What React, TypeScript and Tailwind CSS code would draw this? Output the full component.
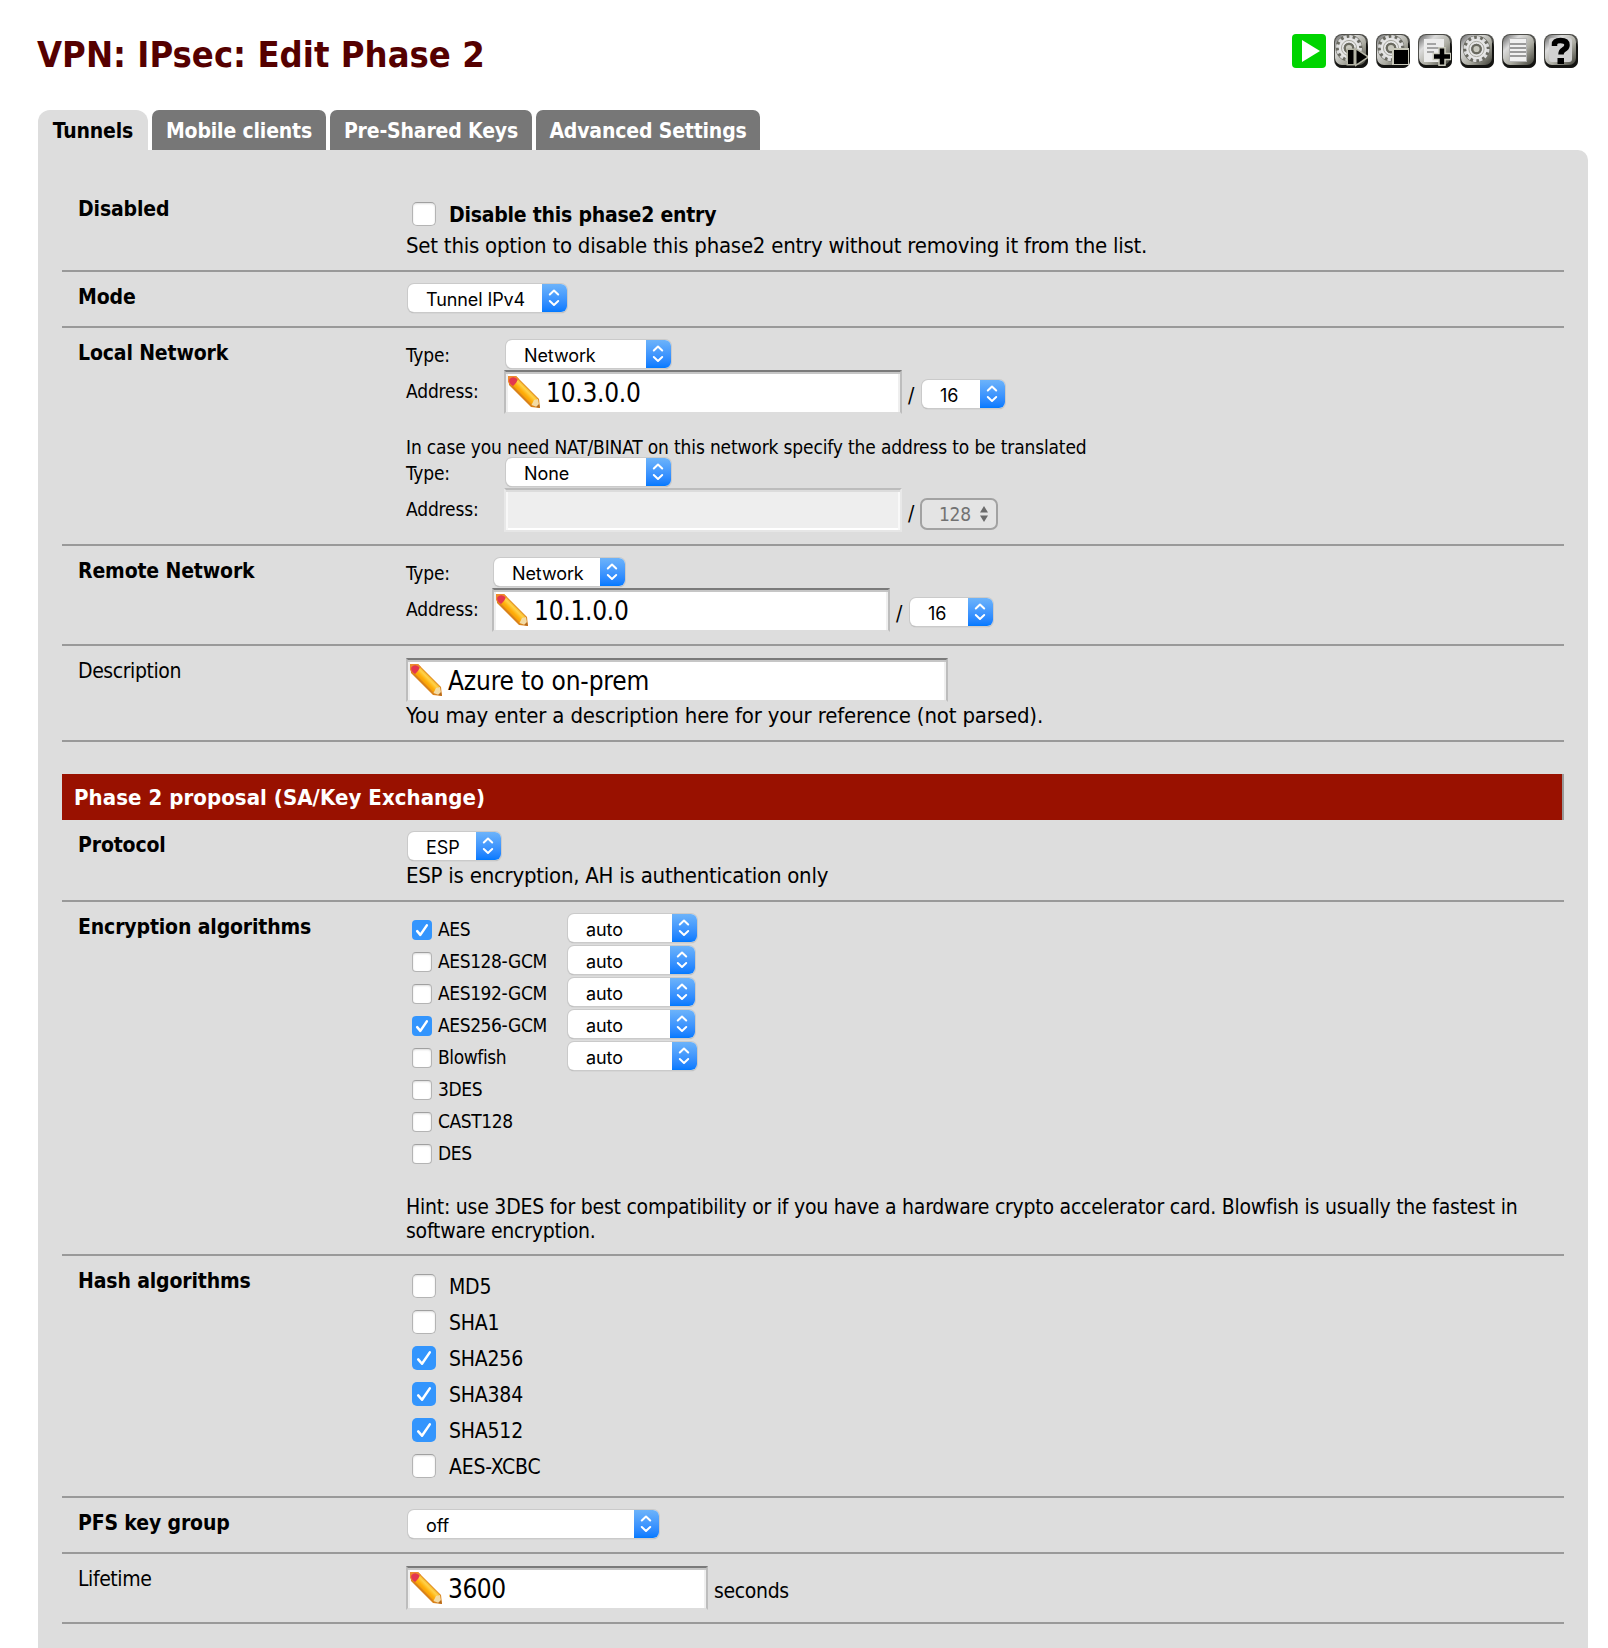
import React from "react";

const UI = 'font-["DejaVu_Sans_Condensed","DejaVu_Sans",sans-serif]';

function Pencil() {
  return (
    <svg viewBox="0 0 32 32" className="h-8 w-8 shrink-0">
      <defs>
        <linearGradient id="pencilBody" x1="0" y1="1" x2="1" y2="0">
          <stop offset="0.3" stopColor="#e88a10" />
          <stop offset="0.46" stopColor="#ffae08" />
          <stop offset="0.56" stopColor="#ffd24a" />
          <stop offset="0.68" stopColor="#e8950f" />
        </linearGradient>
      </defs>
      <path d="M0 1 L8 0 L31 23 L32 32 L23 31 L1 9 Z" fill="#d9821a" />
      <path d="M3 8 L9 2 L29.5 22.5 L24 29 Z" fill="url(#pencilBody)" />
      <path d="M0 0 L8 0 L11 3 L4 10 L0 6 Z" fill="#ee8a2e" />
      <path d="M1.5 3 Q5 -0.5 9 3 Q10 6 5 10 Q0 7 1.5 3 Z" fill="#e3364f" />
      <path d="M23.5 29 L26 24 L30 23 L31 29 L29 31 Z" fill="#f3dba4" />
      <path d="M28 31 L31 28 L32 32 Z" fill="#b5691c" />
    </svg>
  );
}

function Select({ label, className }: { label: string; className: string }) {
  return (
    <div
      className={`flex h-7 shrink-0 overflow-hidden rounded-md bg-white shadow-[0_0_0_1px_#cacaca,0_1px_1px_#8e8e8e] ${className}`}
    >
      <div className='flex-1 whitespace-nowrap pl-[18px] pt-[2px] font-["Inter",sans-serif] text-[18px] leading-7 tracking-[-0.1px]'>{label}</div>
      <div className="flex w-[25px] items-center justify-center bg-linear-to-b from-[#6cb3fa] to-[#0079ff] pr-px">
        <svg viewBox="0 0 12 18" className="h-[18px] w-3" fill="none" stroke="#fff" strokeWidth="2" strokeLinecap="round" strokeLinejoin="round">
          <path d="M1.8 5.5 L6 1.5 L10.2 5.5 M1.8 12 L6 16 L10.2 12" />
        </svg>
      </div>
    </div>
  );
}

function Check({ on, small }: { on?: boolean; small?: boolean }) {
  const size = small ? "size-5 rounded-[4px]" : "size-6 rounded-[5px]";
  if (!on)
    return (
      <span
        className={`block shrink-0 border border-[#b4b4b4] border-t-[#a0a0a0] bg-white shadow-[inset_0_1px_2px_#ddd] ${size}`}
      />
    );
  return (
    <span className={`block shrink-0 bg-[#3395fd] ${size}`}>
      <svg viewBox="0 0 24 24" className="h-full w-full" fill="none" stroke="#fff" strokeWidth={small ? 3 : 2.5} strokeLinecap="round" strokeLinejoin="round">
        <path d="M6.2 13.4 L10 17.8 L17.8 6.4" />
      </svg>
    </span>
  );
}

function Input({ value, className }: { value: string; className: string }) {
  return (
    <div
      className={`flex h-11 shrink-0 items-start border-2 border-x-[#bdbdbd] border-t-[#7a7a7a] border-b-[#dddddd] bg-white pl-0.5 pt-1 shadow-[inset_0_2px_0_#c6c6c6,inset_2px_0_0_#efefef,inset_-2px_0_0_#efefef] ${className}`}
    >
      <Pencil />
      <span className="ml-1.5 whitespace-nowrap pt-px text-[26px] leading-8">{value}</span>
    </div>
  );
}

function Row({ label, plain, className, children }: { label: string; plain?: boolean; className: string; children: React.ReactNode }) {
  return (
    <div className={`flex border-b-2 border-[#999999] ${className}`}>
      <div className={`w-[344px] shrink-0 pl-4 pt-[13px] text-[21px] leading-6 ${plain ? "tracking-[-0.42px]" : "font-bold tracking-[-0.14px]"}`}>
        {label}
      </div>
      <div className="min-w-0 flex-1 pt-3">{children}</div>
    </div>
  );
}

function Small({ className, children }: { className: string; children: React.ReactNode }) {
  return <div className={`shrink-0 whitespace-nowrap text-[19px] leading-6 tracking-[-0.15px] ${className}`}>{children}</div>;
}

function Note({ className, children }: { className: string; children: React.ReactNode }) {
  return <div className={`whitespace-nowrap text-[22px] leading-6 ${className}`}>{children}</div>;
}

function Slash() {
  return <div className="w-5 shrink-0 pl-1.5 pt-3.5 text-[21px] leading-6">/</div>;
}

function Base({ kind }: { kind: string }) {
  return (
    <>
      <defs>
        <linearGradient id={`metal-${kind}`} x1="0" y1="0" x2="1" y2="1">
          <stop offset="0" stopColor="#5f5f5f" />
          <stop offset="0.28" stopColor="#dcdcdc" />
          <stop offset="0.6" stopColor="#acaca2" />
          <stop offset="1" stopColor="#3c3c34" />
        </linearGradient>
      </defs>
      <rect x="0" y="0" width="34" height="34" rx="8" fill="#4e4e4a" />
      <rect x="1" y="6" width="33" height="28" rx="7" fill="#141412" />
      <rect x="1" y="1" width="31" height="30" rx="7" fill={`url(#metal-${kind})`} />
    </>
  );
}

function Gear({ cx, cy }: { cx: number; cy: number }) {
  return (
    <>
      <circle cx={cx} cy={cy} r="13.5" fill="#6a6a62" />
      <circle cx={cx} cy={cy} r="11" fill="none" stroke="#dcdcdc" strokeWidth="4" strokeDasharray="3.2 2.56" />
      <circle cx={cx} cy={cy} r="7.8" fill="none" stroke="#e6e6e6" strokeWidth="5" />
      <circle cx={cx} cy={cy} r="7.6" fill="none" stroke="#a8a8a0" strokeWidth="1" />
      <circle cx={cx} cy={cy} r="4.2" fill="#c8c8be" stroke="#6a6a60" strokeWidth="2.2" />
    </>
  );
}

function ToolIcon({ kind }: { kind: string }) {
  return (
    <svg viewBox="0 0 34 34" className="size-[34px]">
      {kind === "play" && (
        <>
          <rect width="34" height="34" rx="4" fill="#00d400" />
          <path d="M10 6 L28 17 L10 28 Z" fill="#fff" />
        </>
      )}
      {kind === "restart" && (
        <>
          <Base kind={kind} />
          <Gear cx={15} cy={14} />
          <path d="M14 16 H19.5 V30 H14 Z M22.5 16 L33 23 L22.5 30 Z" fill="#000" stroke="#b4b4a6" strokeWidth="3" />
          <path d="M14 16 H19.5 V30 H14 Z M22.5 16 L33 23 L22.5 30 Z" fill="#000" />
        </>
      )}
      {kind === "stop" && (
        <>
          <Base kind={kind} />
          <Gear cx={15} cy={14} />
          <rect x="16" y="14" width="17" height="17" fill="#c9c9bb" />
          <rect x="18" y="16" width="14" height="14" fill="#000" />
        </>
      )}
      {kind === "add" && (
        <>
          <Base kind={kind} />
          <rect x="6" y="5" width="20" height="23" fill="#ececec" />
          <path d="M9 10 H18 M9 14 H22 M9 18 H16" stroke="#8c8c8c" strokeWidth="1.6" />
          <path d="M24 13 V32 M14.5 22.5 H33" stroke="#c9c9bb" strokeWidth="7.5" />
          <path d="M24 14.5 V30.5 M16 22.5 H32" stroke="#000" strokeWidth="4.5" />
        </>
      )}
      {kind === "gear" && (
        <>
          <Base kind={kind} />
          <Gear cx={16.5} cy={15} />
        </>
      )}
      {kind === "list" && (
        <>
          <Base kind={kind} />
          <rect x="7.5" y="4.5" width="17" height="23" fill="#f0f0f0" stroke="#b5b5b5" />
          <path d="M8 10 H24 M8 14 H24 M8 18 H24 M8 22 H24" stroke="#7d7d7d" strokeWidth="1.6" />
        </>
      )}
      {kind === "help" && (
        <>
          <Base kind={kind} />
          <rect x="5" y="4" width="23" height="24" rx="3" fill="#d0d0d0" />
          <path d="M10.5 12 V10.5 Q10.5 6.5 16.5 6.5 Q23 6.5 23 11 Q23 14 19.5 15.8 Q17 17.2 17 20.5" fill="none" stroke="#000" strokeWidth="5.5" />
          <rect x="13.5" y="24" width="6.5" height="6" fill="#000" />
        </>
      )}
    </svg>
  );
}

const encryption = [
  { name: "AES", on: true, select: "w-[129px]" },
  { name: "AES128-GCM", select: "w-[127px]" },
  { name: "AES192-GCM", select: "w-[127px]" },
  { name: "AES256-GCM", on: true, select: "w-[127px]" },
  { name: "Blowfish", select: "w-[129px]" },
  { name: "3DES" },
  { name: "CAST128" },
  { name: "DES" },
];

const hashes = [
  { name: "MD5" },
  { name: "SHA1" },
  { name: "SHA256", on: true },
  { name: "SHA384", on: true },
  { name: "SHA512", on: true },
  { name: "AES-XCBC" },
];

const tabs = [
  { name: "Mobile clients", width: "w-[174px]" },
  { name: "Pre-Shared Keys", width: "w-[202px]" },
  { name: "Advanced Settings", width: "w-[224px]" },
];

export default function App() {
  return (
    <div className={`flex h-[1648px] w-[1608px] flex-col overflow-hidden bg-white pl-[38px] pr-5 text-black ${UI}`}>
      <header className="flex h-[110px] shrink-0 items-start justify-between pr-[10px] pt-[34px]">
        <h1 className="-ml-px -mt-px text-[36px] font-bold leading-[44px] tracking-[0.04px] text-[#550000]">VPN: IPsec: Edit Phase 2</h1>
        <div className="flex gap-2">
          {["play", "restart", "stop", "add", "gear", "list", "help"].map((k) => (
            <ToolIcon key={k} kind={k} />
          ))}
        </div>
      </header>

      <nav className="flex h-10 shrink-0 gap-1 text-center text-[21px] font-bold leading-[42px] tracking-[-0.16px]">
        <div className="h-10 w-[110px] rounded-t-[12px] bg-[#dddddd]">Tunnels</div>
        {tabs.map((t) => (
          <div key={t.name} className={`h-10 whitespace-nowrap rounded-t-[7px] bg-[#777777] text-white ${t.width}`}>
            {t.name}
          </div>
        ))}
      </nav>

      <main className="flex-1 rounded-tr-[10px] bg-[#dddddd] pl-6 pr-6 pt-[34px]">
        <Row label="Disabled" className="h-[88px]">
          <div className="flex pl-1.5 pt-1.5">
            <Check />
            <span className="ml-[13px] pt-px text-[21px] font-bold leading-6 tracking-[-0.22px]">Disable this phase2 entry</span>
          </div>
          <Note className="mt-[7px] tracking-[-0.23px]">
            Set this option to disable this phase2 entry without removing it from the list.
          </Note>
        </Row>

        <Row label="Mode" className="h-14">
          <Select label="Tunnel IPv4" className="ml-0.5 w-[159px]" />
        </Row>

        <Row label="Local Network" className="h-[218px]">
          <div className="flex h-[30px]">
            <Small className="w-[98px] pt-[3px]">Type:</Small>
            <Select label="Network" className="ml-0.5 w-[165px]" />
          </div>
          <div className="flex h-11">
            <Small className="w-[98px] pt-[9px]">Address:</Small>
            <Input value="10.3.0.0" className="w-[398px] tracking-[-0.25px]" />
            <Slash />
            <Select label="16" className="mt-2.5 w-[83px]" />
          </div>
          <Small className="mt-[21px] h-[23px]">
            In case you need NAT/BINAT on this network specify the address to be translated
          </Small>
          <div className="flex h-[30px]">
            <Small className="w-[98px] pt-[3px]">Type:</Small>
            <Select label="None" className="ml-0.5 w-[165px]" />
          </div>
          <div className="flex h-11">
            <Small className="w-[98px] pt-[9px]">Address:</Small>
            <div className="w-[398px] shrink-0 border-2 border-x-[#e8e8e8] border-t-[#bcbcbc] border-b-[#e6e6e6] bg-[#eeeeee] shadow-[inset_0_2px_0_#dcdcdc,inset_2px_0_0_#f8f8f8,inset_-2px_0_0_#f8f8f8,inset_0_-2px_0_#fff]" />
            <Slash />
            <div className="-ml-0.5 mt-2.5 flex h-8 w-[78px] items-center rounded-[7px] border-2 border-[#a2a2a2] bg-[#e4e4e4] pl-[17px] text-[19px] leading-6 tracking-[-0.3px] text-[#727272]">
              128
              <svg viewBox="0 0 10 18" className="ml-2 h-[18px] w-2.5" fill="#6b6b6b">
                <path d="M5 1 L9 7.5 H1 Z M5 17 L9 10.5 H1 Z" />
              </svg>
            </div>
          </div>
        </Row>

        <Row label="Remote Network" className="h-[100px]">
          <div className="flex h-[30px]">
            <Small className="w-[86px] pt-[3px]">Type:</Small>
            <Select label="Network" className="ml-0.5 w-[131px]" />
          </div>
          <div className="flex h-11">
            <Small className="w-[86px] pt-[9px]">Address:</Small>
            <Input value="10.1.0.0" className="w-[398px] tracking-[-0.25px]" />
            <Slash />
            <Select label="16" className="mt-2.5 w-[83px]" />
          </div>
        </Row>

        <Row label="Description" plain className="h-24">
          <Input value="Azure to on-prem" className="w-[542px] tracking-[-0.15px]" />
          <Note className="mt-0.5 tracking-[-0.16px]">You may enter a description here for your reference (not parsed).</Note>
        </Row>

        <h2 className="mt-8 h-[46px] border-r-2 border-[#999999] bg-[#991100] pl-3 text-[22px] font-bold leading-[48px] tracking-[0.06px] text-white">
          Phase 2 proposal (SA/Key Exchange)
        </h2>

        <Row label="Protocol" className="h-[82px]">
          <Select label="ESP" className="ml-0.5 w-[93px]" />
          <Note className="mt-1 tracking-[-0.24px]">ESP is encryption, AH is authentication only</Note>
        </Row>

        <Row label="Encryption algorithms" className="h-[354px]">
          {encryption.map((e) => (
            <div key={e.name} className="flex h-8 pl-1.5">
              <div className="pt-1.5">
                <Check small on={e.on} />
              </div>
              <span className="ml-1.5 w-[130px] text-[19px] leading-[30px] tracking-[-0.4px]">{e.name}</span>
              {e.select && <Select label="auto" className={e.select} />}
            </div>
          ))}
          <p className="mt-[25px] text-[21px] leading-6 tracking-[-0.23px]">
            Hint: use 3DES for best compatibility or if you have a hardware crypto accelerator card. Blowfish is usually the fastest in
            <br />
            software encryption.
          </p>
        </Row>

        <Row label="Hash algorithms" className="h-[242px]">
          {hashes.map((h) => (
            <div key={h.name} className="flex h-9 items-center pl-1.5">
              <Check on={h.on} />
              <span className="ml-[13px] pt-0.5 text-[21px] leading-9 tracking-[-0.2px]">{h.name}</span>
            </div>
          ))}
        </Row>

        <Row label="PFS key group" className="h-14">
          <Select label="off" className="ml-0.5 w-[251px]" />
        </Row>

        <Row label="Lifetime" plain className="h-[70px]">
          <div className="flex">
            <Input value="3600" className="w-[302px] tracking-[-0.5px]" />
            <span className="pl-1.5 pt-[13px] text-[21px] leading-6 tracking-[-0.35px]">seconds</span>
          </div>
        </Row>
      </main>
    </div>
  );
}
